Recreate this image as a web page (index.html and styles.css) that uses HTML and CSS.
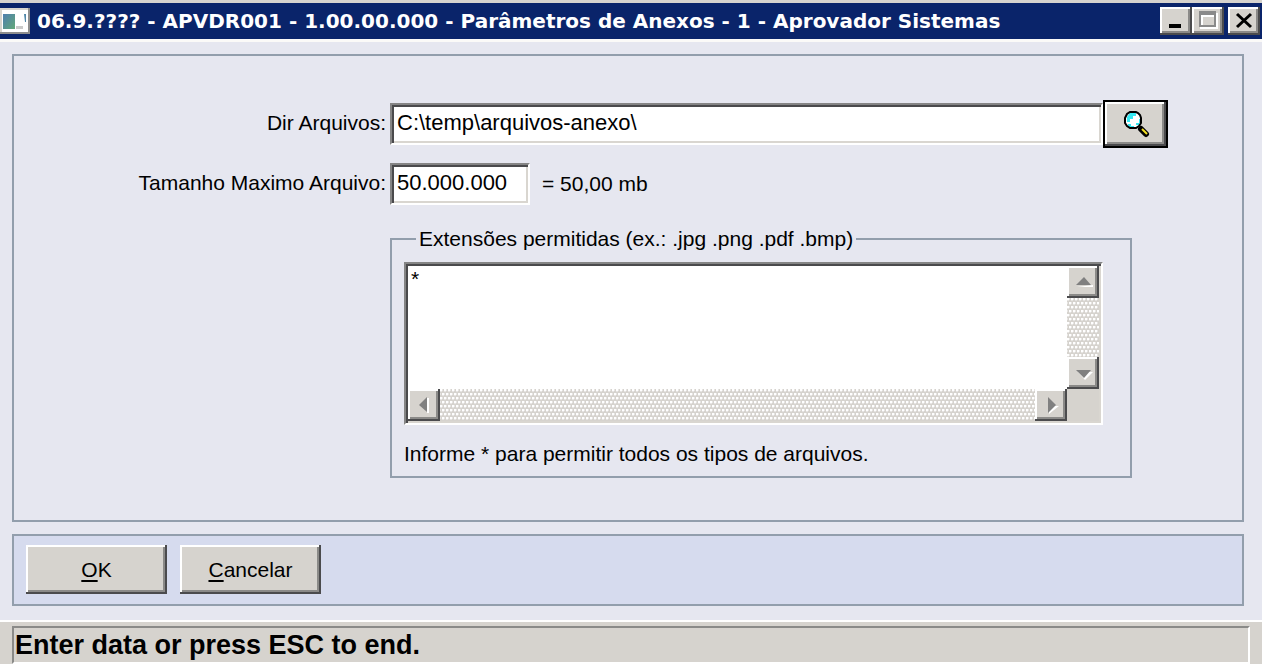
FILE: index.html
```html
<!DOCTYPE html>
<html lang="pt-BR">
<head>
<meta charset="utf-8">
<title>Parâmetros de Anexos</title>
<link rel="stylesheet" href="styles.css">
</head>
<body>
<div class="window">
  <header class="titlebar">
    <svg class="app-icon" viewBox="0 0 30 26" aria-hidden="true">
      <defs><linearGradient id="pane" x1="0" y1="0" x2="1" y2="1"><stop offset="0" stop-color="#4f7fb0"/><stop offset="1" stop-color="#62a878"/></linearGradient></defs>
      <path fill="#fff" d="M0 0h30v26H0z"/>
      <path fill="#8e8e8e" d="M28 0h2v26H0v-2h28z"/>
      <path fill="#d8d5ce" d="M0 0h28v2H2v22H0z"/>
      <path fill="url(#pane)" d="M3 6h12v15H3z"/>
      <path fill="#4f86a8" d="M24 6h2v8h-1z"/>
      <path fill="#c9c9c9" d="M16 18h7v3h-7z"/>
    </svg>
    <h1 class="title">06.9.???? - APVDR001 - 1.00.00.000 - Parâmetros de Anexos - 1 - Aprovador Sistemas</h1>
    <div class="window-buttons">
      <button class="raised caption" type="button" aria-label="Minimizar"><svg viewBox="0 0 24 20"><path fill="#000" d="M5 14h12v4H5z"/></svg></button>
      <button class="raised caption" type="button" aria-label="Maximizar" disabled><svg viewBox="0 0 24 20"><path fill="none" stroke="#fff" stroke-width="2" d="M21 3v15H4"/><path fill="none" stroke="#8a8a8a" stroke-width="2" d="M4 3h15v13H4z"/><path fill="#8a8a8a" d="M3 1h17v4H3z"/><path fill="none" stroke="#fff" stroke-width="2" d="M6 15V6h12"/></svg></button>
      <button class="raised caption caption-close" type="button" aria-label="Fechar"><svg viewBox="0 0 24 20"><path fill="none" stroke="#000" stroke-width="3" d="M5 4l14 13M19 4L5 17"/></svg></button>
    </div>
  </header>

  <main class="client">
    <section class="panel form">
      <label class="label" for="dir">Dir Arquivos:</label>
      <div class="field">
        <input class="sunken text grow" id="dir" type="text" value="C:\temp\arquivos-anexo\">
        <button class="browse" type="button" aria-label="Procurar"><span class="raised browse-face">
          <svg class="lens" viewBox="0 0 28 28" aria-hidden="true">
            <path fill="#fff" d="M8 3h7l4 4v7l-4 4H8l-4-4V7z"/>
            <path fill="#35e8f2" d="M8 3h6v3h-3v3H8v3H5V7zM17 9h2v4h-2v2h-3v-2h3zM6 14h3v2h3v2H8l-2-2z"/>
            <path fill="none" stroke="#000" stroke-width="2" d="M8 2h6l2 1 2 2 1 3v5l-2 3-3 2H8l-3-2-2-3V8l2-4z"/>
            <path stroke="#000" stroke-width="6" stroke-linecap="round" d="M19 19l5 5"/>
            <path stroke="#f2df25" stroke-width="2" d="M20 19l5 5"/>
          </svg></span></button>
      </div>

      <label class="label" for="size">Tamanho Maximo Arquivo:</label>
      <div class="field">
        <input class="sunken text short" id="size" type="text" value="50.000.000">
        <span class="hint">= 50,00 mb</span>
      </div>

      <fieldset class="group">
        <legend class="legend">Extensões permitidas (ex.: .jpg .png .pdf .bmp)</legend>
        <div class="sunken memo">
          <textarea class="memo-text" aria-label="Extensões permitidas">*</textarea>
          <div class="scroll vertical">
            <button class="raised scroll-button" type="button" aria-label="Para cima"><svg viewBox="0 0 24 24"><path fill="#fff" d="M6 17h16v-2z"/><path fill="#808080" d="M5 15h15l-7-8z"/></svg></button>
            <button class="raised scroll-button" type="button" aria-label="Para baixo"><svg viewBox="0 0 24 24"><path fill="#fff" d="M7 11h15l-8 8z"/><path fill="#808080" d="M5 9h15l-7 8z"/></svg></button>
          </div>
          <div class="scroll horizontal">
            <button class="raised scroll-button" type="button" aria-label="Para a esquerda"><svg viewBox="0 0 24 24"><path fill="#fff" d="M15 5h2v15h-2z"/><path fill="#808080" d="M15 4v15l-8-7z"/></svg></button>
            <button class="raised scroll-button" type="button" aria-label="Para a direita"><svg viewBox="0 0 24 24"><path fill="#fff" d="M10 21v-8h10z"/><path fill="#808080" d="M9 4v16l8-8z"/></svg></button>
          </div>
        </div>
        <p class="note">Informe * para permitir todos os tipos de arquivos.</p>
      </fieldset>
    </section>

    <section class="panel actions">
      <button class="raised command" type="button"><span><u>O</u>K</span></button>
      <button class="raised command" type="button"><span><u>C</u>ancelar</span></button>
    </section>
  </main>

  <footer class="statusbar"><p class="status">Enter data or press ESC to end.</p></footer>
</div>
</body>
</html>
```
FILE: styles.css
```css
* { box-sizing: border-box; }

body {
  margin: 0;
  background: #e6e7f0;
  color: #000;
  font: 21px/26px "Liberation Sans", Arial, sans-serif;
}

button, input, textarea { font: inherit; color: inherit; }
button { padding: 0; }
svg { display: block; }

.window {
  display: flex;
  flex-direction: column;
  min-height: 100vh;
}

.titlebar {
  display: flex;
  align-items: center;
  height: 42px;
  background: #0a246a;
  border-top: 3px solid #d6d3ce;
  border-bottom: 3px solid #fbfaf8;
}
.app-icon { width: 30px; height: 26px; flex: none; }
.title {
  flex: 1;
  margin: 0 0 0 7px;
  overflow: hidden;
  color: #fff;
  font: bold 20px/30px "DejaVu Sans", Verdana, sans-serif;
  white-space: nowrap;
}
.window-buttons { display: flex; padding-right: 2px; }

.raised {
  background: #d6d3ce;
  border: 0;
  box-shadow: inset -2px -2px #4b4b4d, inset 2px 2px #fff, inset -4px -4px #8b8a88;
}
.caption { width: 32px; height: 28px; padding: 3px 4px 5px; }
.caption svg { width: 24px; height: 20px; }
.caption-close { margin-left: 4px; }

.client {
  display: flex;
  flex: 1;
  flex-direction: column;
  gap: 12px;
  padding: 12px 18px 14px 12px;
}
.panel { border: 2px solid #929eac; }

.form {
  display: grid;
  flex: 1;
  grid-template-columns: 372px 1fr;
  align-content: start;
  column-gap: 4px;
  padding: 44px 74px 0 0;
}
.label { padding-top: 10px; text-align: right; white-space: nowrap; }
.field { display: flex; align-items: center; height: 48px; }
.sunken {
  background: #fff;
  border: 2px solid;
  border-color: #858585 #fff #fff #858585;
  box-shadow: inset 2px 2px #4a4a4c, inset -2px -2px #d9d6d0;
}
.text {
  height: 42px;
  padding: 0 4px 2px 5px;
  border-radius: 0;
  outline: 0;
  font-size: 22px;
}
.grow { flex: 1; min-width: 0; }
.short { width: 140px; }
.hint { margin-left: 12px; }

.browse {
  width: 65px;
  height: 48px;
  border: 2px solid #000;
  background: #000;
}
.browse-face { display: grid; place-items: center; height: 100%; }
.lens { width: 28px; height: 28px; }

.form > .label:nth-of-type(2),
.form > .label:nth-of-type(2) + .field { margin-top: 12px; }

.group {
  grid-column: 2;
  min-width: 0;
  margin: 18px 36px 0 0;
  padding: 10px 27px 9px 12px;
  border: 2px solid #929eac;
}
.legend { margin-left: 12px; padding: 0 3px; }
.memo {
  display: grid;
  grid-template: 1fr 32px / 1fr 32px;
  height: 163px;
  padding: 2px;
  background: #d6d3ce;
}
.memo-text {
  width: 100%;
  padding: 0 3px;
  border: 0;
  outline: 0;
  background: #fff;
  resize: none;
}
.scroll {
  display: flex;
  justify-content: space-between;
  background-color: #d6d3ce;
  background-image:
    radial-gradient(circle at 1px 1px, #fff 1px, transparent 2px),
    radial-gradient(circle at 1px 1px, #fff 1px, transparent 2px);
  background-position: 0 0, 2px 4px;
  background-size: 4px 8px;
}
.vertical { flex-direction: column; }
.scroll-button { display: grid; width: 32px; height: 32px; place-items: center; }
.scroll-button svg { width: 24px; height: 24px; }
.note { margin: 16px 0 0; }

.actions {
  display: flex;
  gap: 13px;
  padding: 9px 12px 10px;
  background: #d6dbee;
}
.command { width: 141px; height: 49px; }
.command u { text-underline-offset: 3px; text-decoration-thickness: 2px; }

.statusbar {
  padding: 4px 12px 0;
  background: #d6d3ce;
  border-top: 2px solid #fff;
}
.status {
  height: 38px;
  margin: 0;
  padding-left: 1px;
  border: 2px solid;
  border-color: #8a8a88 #fff #fff #8a8a88;
  font-size: 27px;
  font-weight: bold;
  line-height: 34px;
}
```
